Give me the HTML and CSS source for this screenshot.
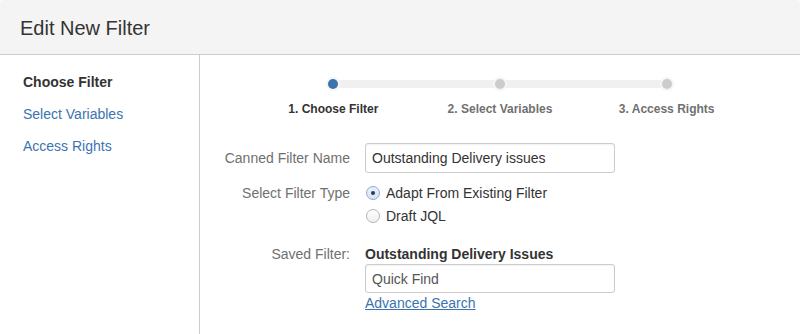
FILE: index.html
```html
<!DOCTYPE html>
<html lang="en">
<head>
<meta charset="utf-8">
<title>Edit New Filter</title>
<link rel="stylesheet" href="styles.css">
</head>
<body>
<div class="dialog">
  <header class="dlg-header"><h2 class="dlg-title">Edit New Filter</h2></header>
  <div class="dlg-body">
    <nav class="menu">
      <ul class="menu-list">
        <li class="menu-item is-selected">Choose Filter</li>
        <li class="menu-item"><a href="#">Select Variables</a></li>
        <li class="menu-item"><a href="#">Access Rights</a></li>
      </ul>
    </nav>
    <main class="content">
      <ol class="tracker">
        <li class="step is-current"><span class="dot"></span><span class="step-label">1. Choose Filter</span></li>
        <li class="step"><span class="dot"></span><span class="step-label">2. Select Variables</span></li>
        <li class="step"><span class="dot"></span><span class="step-label">3. Access Rights</span></li>
      </ol>
      <form class="form">
        <div class="field-group fg-name">
          <label class="field-label" for="name">Canned Filter Name</label>
          <div class="field"><input class="text" id="name" type="text" value="Outstanding Delivery issues"></div>
        </div>
        <div class="field-group fg-type">
          <span class="field-label">Select Filter Type</span>
          <div class="field">
            <label class="radio"><input type="radio" name="type" checked><span>Adapt From Existing Filter</span></label>
            <label class="radio"><input type="radio" name="type"><span>Draft JQL</span></label>
          </div>
        </div>
        <div class="field-group fg-saved">
          <span class="field-label">Saved Filter:</span>
          <div class="field">
            <div class="saved-name">Outstanding Delivery Issues</div>
            <input class="text" type="text" placeholder="Quick Find">
            <a class="adv-link" href="#">Advanced Search</a>
          </div>
        </div>
      </form>
    </main>
  </div>
</div>
</body>
</html>
```
FILE: styles.css
```css
* { box-sizing: border-box; }
html, body { margin: 0; padding: 0; background: #fff; }
body {
  font-family: "Liberation Sans", Arial, Helvetica, sans-serif;
  font-size: 14px;
  line-height: 20px;
  color: #333;
  width: 800px;
  height: 334px;
  overflow: hidden;
}
.dialog { width: 800px; height: 334px; display: flex; flex-direction: column; }
.dlg-header {
  height: 55px;
  background: #f4f4f4;
  border-bottom: 1px solid #cccccc;
  border-radius: 3px 3px 0 0;
  display: flex;
  align-items: center;
  padding: 0 20px 0 20px;
}
.dlg-title { margin: 0; font-size: 20px; font-weight: normal; color: #333; line-height: 24px; padding-top: 2px; }
.dlg-body { flex: 1; display: flex; }
.menu { width: 200px; border-right: 1px solid #cccccc; padding: 16px 0 0 23px; }
.menu-list { list-style: none; margin: 0; padding: 0; }
.menu-item { height: 32px; line-height: 22px; }
.menu-item.is-selected { font-weight: bold; color: #333; }
.menu-item a { color: #3b73af; text-decoration: none; }
.content { flex: 1; padding-top: 22px; }
.tracker {
  list-style: none; margin: 0 50px; padding: 0;
  display: grid; grid-template-columns: repeat(3, 1fr);
  position: relative;
}
.tracker::before {
  content: ""; position: absolute; left: 16.67%; right: 16.67%; top: 3px; height: 8px;
  background: #f0f0f0;
}
.step { display: flex; flex-direction: column; align-items: center; position: relative; }
.dot {
  width: 14px; height: 14px; border-radius: 50%; background: #f5f5f5;
  display: flex; align-items: center; justify-content: center;
}
.dot::after { content: ""; width: 10px; height: 10px; border-radius: 50%; background: #cccccc; }
.is-current .dot::after { background: #3b73af; }
.step-label { margin-top: 10px; font-size: 12px; font-weight: bold; line-height: 16px; color: #707070; }
.is-current .step-label { color: #333; }
.form { margin-top: 26px; }
.field-group { display: grid; grid-template-columns: 150px 250px; column-gap: 15px; }
.field-label { text-align: right; color: #707070; line-height: 20px; }
.fg-name .field-label { line-height: 30px; }
.fg-type { margin-top: 10px; }
.fg-saved { margin-top: 15px; }
.text {
  display: block; width: 250px; height: 29px; margin: 0;
  border: 1px solid #cccccc; border-radius: 3px;
  padding: 0 6px; font: inherit; color: #333; background: #fff;
  box-shadow: inset 0 1px 2px rgba(0,0,0,0.06);
}
.fg-name .text { height: 30px; }
.text::placeholder { color: #555; }
.radio { display: flex; align-items: center; height: 20px; margin-bottom: 3px; }
.radio input {
  -webkit-appearance: none; appearance: none; margin: 0 6px 0 1px;
  width: 14px; height: 14px; border-radius: 50%;
  border: 1px solid #b5b5b5; background: linear-gradient(#ffffff, #f0f0f0);
  display: inline-flex; align-items: center; justify-content: center;
}
.radio input:checked { border-color: #8fa9d0; background: linear-gradient(#eaf1fb, #d6e3f5); }
.radio input:checked::after { content: ""; width: 4px; height: 4px; border-radius: 50%; background: #2b3a55; }
.saved-name { font-weight: bold; color: #333; }
.adv-link { color: #3b73af; text-decoration: underline; }
```
